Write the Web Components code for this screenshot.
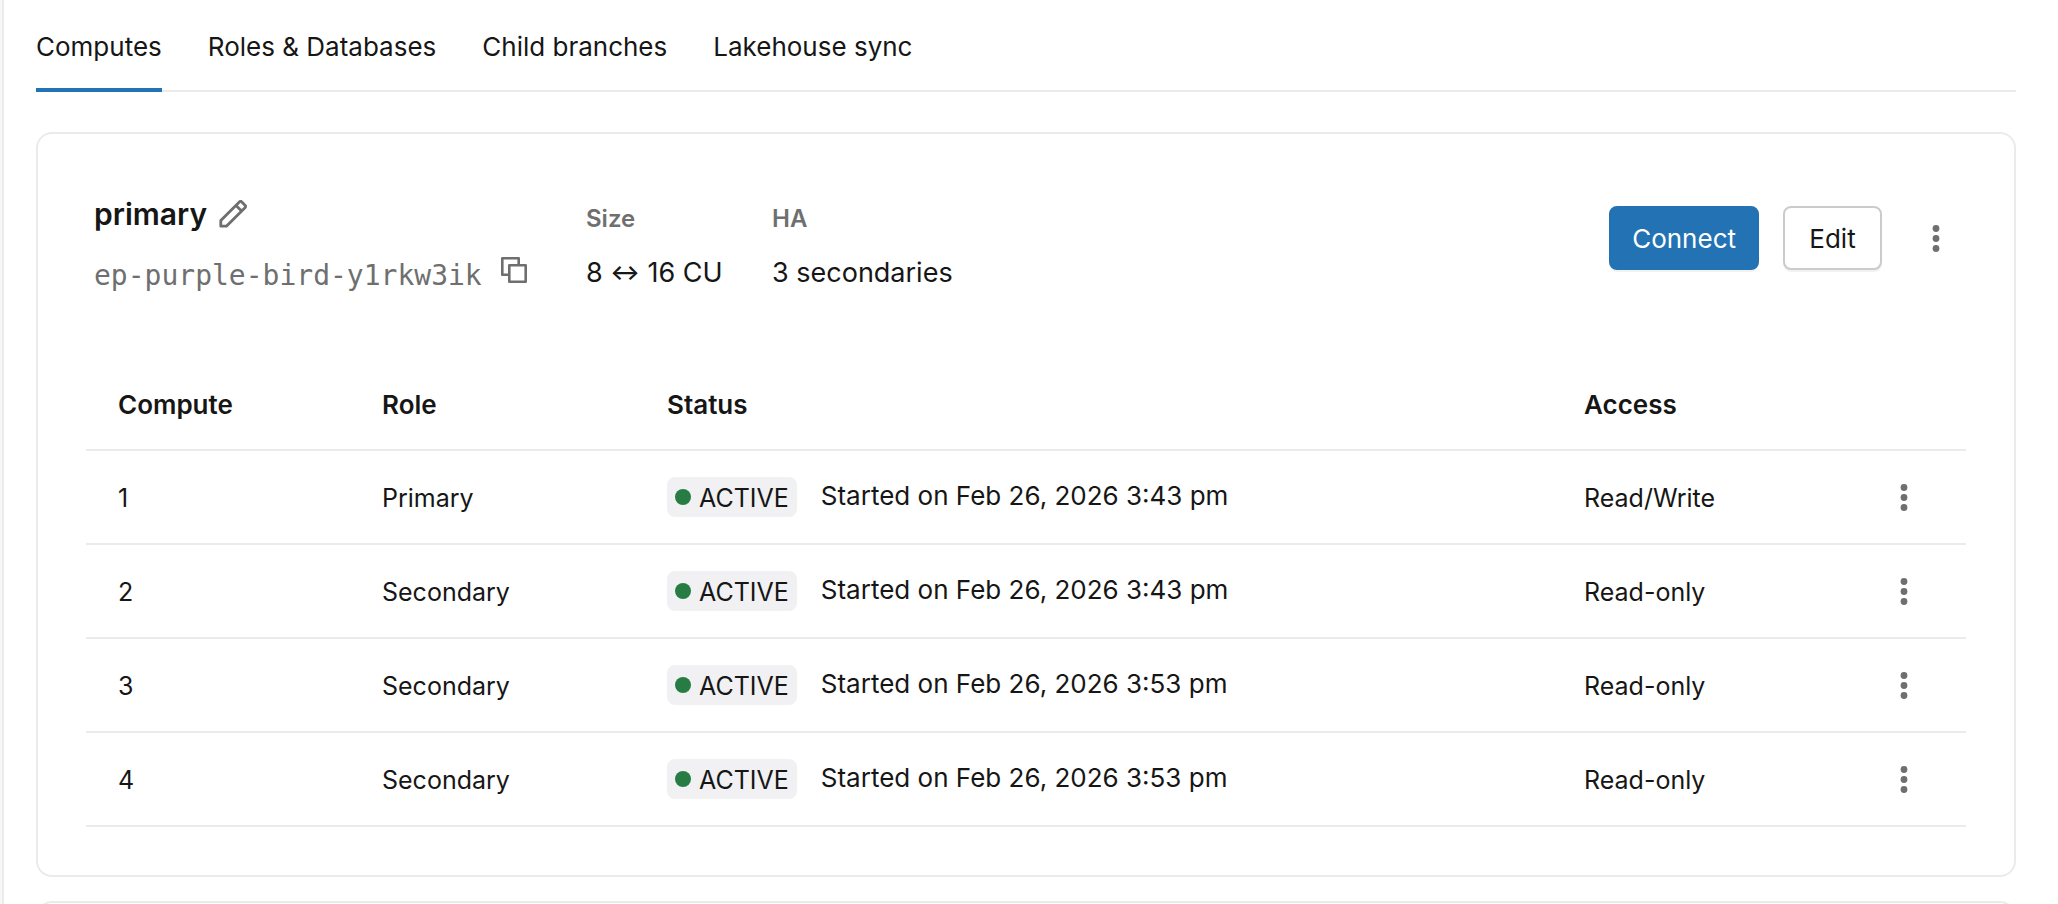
<!DOCTYPE html>
<html lang="en">
<head>
<meta charset="utf-8">
<meta name="viewport" content="width=device-width, initial-scale=1">
<title>Computes</title>
<style>
  html, body { margin: 0; height: 100%; }
  body {
    --text: #161616;
    --muted: #6f6f6f;
    --line: #ebebeb;
    --accent: #2272b4;
    background: #fff;
    color: var(--text);
    font: 400 26px/40px Inter, "Liberation Sans", sans-serif;
  }
</style>
</head>
<body>
<branch-page></branch-page>

<script>
function define(name, html, setup) {
  const template = document.createElement('template');
  template.innerHTML = html;
  customElements.define(name, class extends HTMLElement {
    constructor() {
      super();
      this.attachShadow({ mode: 'open' }).append(template.content.cloneNode(true));
    }
    connectedCallback() { if (setup) setup(this, this.shadowRoot); }
  });
}

define('kebab-button', `
  <style>
    :host { display: inline-flex; }
    button { display: grid; place-items: center; width: 60px; height: 64px; padding: 0; border: 0; background: none; color: var(--muted); }
  </style>
  <button type="button" aria-label="More actions">
    <svg width="32" height="32" viewBox="0 0 32 32" fill="currentColor">
      <circle cx="16" cy="6.5" r="3.4"/><circle cx="16" cy="16.5" r="3.4"/><circle cx="16" cy="26.5" r="3.4"/>
    </svg>
  </button>`);

define('icon-button', `
  <style>
    :host { display: inline-flex; }
    button { display: grid; place-items: center; width: 32px; height: 28px; padding: 0; border: 0; background: none; color: var(--muted); }
  </style>
  <button type="button"><slot></slot></button>`,
  (el, root) => root.querySelector('button').setAttribute('aria-label', el.getAttribute('label')));

define('action-button', `
  <style>
    :host { display: inline-flex; }
    button { box-sizing: border-box; min-width: 99px; height: 64px; padding: 2px 21px 0; border: 2px solid #cbcbcb; border-radius: 8px; background: #fff; color: var(--text); font: inherit; box-shadow: 0 2px 0 #0000000d; }
    :host([primary]) button { background: var(--accent); border-color: var(--accent); color: #fff; }
  </style>
  <button type="button"><slot></slot></button>`);

define('status-badge', `
  <style>
    :host { display: inline-flex; align-items: center; gap: 8px; box-sizing: border-box; height: 40px; padding: 0 8px; border-radius: 8px; background: #f1f1f3; }
    i { width: 16px; height: 16px; border-radius: 50%; background: #277c43; }
    span { padding-top: 2px; }
  </style>
  <i></i><span><slot></slot></span>`);

define('tab-bar', `
  <style>
    :host { display: block; border-bottom: 2px solid var(--line); }
    div { display: flex; gap: 46px; margin-bottom: -2px; }
    button { padding: 27px 0 21px; border: 0; border-bottom: 4px solid transparent; background: none; color: inherit; font: inherit; white-space: nowrap; }
    button[aria-selected=true] { border-color: var(--accent); }
  </style>
  <div role="tablist">
    <button type="button" role="tab" aria-selected="true">Computes</button>
    <button type="button" role="tab" aria-selected="false">Roles &amp; Databases</button>
    <button type="button" role="tab" aria-selected="false">Child branches</button>
    <button type="button" role="tab" aria-selected="false">Lakehouse sync</button>
  </div>`);

define('content-card', `
  <style>
    :host { display: block; padding: 48px; border: 2px solid var(--line); border-radius: 16px; }
  </style>
  <slot></slot>`);

define('compute-header', `
  <style>
    :host { display: grid; grid-template-columns: minmax(444px, auto) minmax(138px, auto) auto 1fr; column-gap: 48px; padding: 12px 0 61px 8px; }
    .identity, .meta { display: flex; flex-direction: column; }
    .row { display: flex; align-items: center; gap: 10px; }
    h2 { margin: 0; font-size: 30px; line-height: 40px; font-weight: 600; }
    .id { margin-top: 22px; gap: 16px; align-items: flex-start; }
    code { color: var(--muted); font: 28px/40px "DejaVu Sans Mono", monospace; }
    .meta { margin: 0; padding-top: 5px; gap: 14px; }
    dt { color: var(--muted); font-size: 24px; font-weight: 600; }
    dd { margin: 0; font-size: 27px; white-space: nowrap; }
    .arrow { font-size: 22px; font-weight: 600; line-height: 1; vertical-align: 2px; }
    .actions { display: flex; justify-content: flex-end; gap: 24px; padding-top: 12px; }
  </style>
  <div class="identity">
    <div class="row">
      <h2>primary</h2>
      <icon-button label="Rename">
        <svg width="28" height="28" viewBox="0 0 28 28" fill="none" stroke="currentColor" stroke-width="2.8" stroke-linejoin="round">
          <path d="M1.8 26.2v-5.6L20.6 1.8q1-.9 2 0l3.6 3.6q.9 1 0 2L7.4 26.2zM17 5.4l5.6 5.6"/>
        </svg>
      </icon-button>
    </div>
    <div class="row id">
      <code>ep-purple-bird-y1rkw3ik</code>
      <icon-button label="Copy">
        <svg width="28" height="28" viewBox="0 0 28 28" fill="none" stroke="currentColor" stroke-width="2.6" stroke-linejoin="round">
          <path d="M9 18.7H2.3V2.3h16.4V9M9.3 9.3h16.4v16.4H9.3z"/>
        </svg>
      </icon-button>
    </div>
  </div>
  <dl class="meta"><dt>Size</dt><dd>8 <span class="arrow">↔</span> 16 CU</dd></dl>
  <dl class="meta"><dt>HA</dt><dd>3 secondaries</dd></dl>
  <div class="actions">
    <action-button primary>Connect</action-button>
    <action-button>Edit</action-button>
    <kebab-button></kebab-button>
  </div>`);

define('compute-table', `
  <style>
    :host { display: block; }
    table { width: 100%; table-layout: fixed; border-collapse: separate; border-spacing: 0; }
    .compute { width: 264px; } .role { width: 285px; } .access { width: 290px; } .more { width: 124px; }
    th, td { box-sizing: border-box; height: 94px; padding: 2px 0 0 32px; border-bottom: 2px solid var(--line); text-align: left; white-space: nowrap; }
    th { padding-top: 4px; font-weight: 600; }
    td { font-size: 25px; }
    td.state { padding-top: 0; }
    td:last-child { padding: 0; text-align: center; }
    td:last-child kebab-button { vertical-align: middle; }
    .status { display: flex; align-items: center; gap: 24px; }
    .started { padding-bottom: 2px; font-size: 26px; }
  </style>
  <table>
    <colgroup><col class="compute"><col class="role"><col><col class="access"><col class="more"></colgroup>
    <thead><tr><th>Compute</th><th>Role</th><th>Status</th><th>Access</th><th></th></tr></thead>
    <tbody></tbody>
  </table>`,
  (el, root) => {
    const rows = [
      ['1', 'Primary', '3:43', 'Read/Write'],
      ['2', 'Secondary', '3:43', 'Read-only'],
      ['3', 'Secondary', '3:53', 'Read-only'],
      ['4', 'Secondary', '3:53', 'Read-only']
    ];
    root.querySelector('tbody').innerHTML = rows.map(([n, role, time, access]) => `
      <tr><td>${n}</td><td>${role}</td>
      <td class="state"><div class="status"><status-badge>ACTIVE</status-badge><span class="started">Started on Feb 26, 2026 ${time} pm</span></div></td>
      <td>${access}</td><td><kebab-button></kebab-button></td></tr>`).join('');
  });

define('branch-page', `
  <style>
    :host { display: grid; grid-template-columns: 4px 1fr; height: 100vh; overflow: hidden; }
    aside { background: #f7f7f7; border-right: 2px solid var(--line); }
    main { min-width: 0; padding: 0 42px 0 32px; }
    section { display: grid; gap: 24px; padding-top: 40px; }
  </style>
  <aside></aside>
  <main>
    <tab-bar></tab-bar>
    <section>
      <content-card><compute-header></compute-header><compute-table></compute-table></content-card>
      <content-card></content-card>
    </section>
  </main>`);
</script>
</body>
</html>
